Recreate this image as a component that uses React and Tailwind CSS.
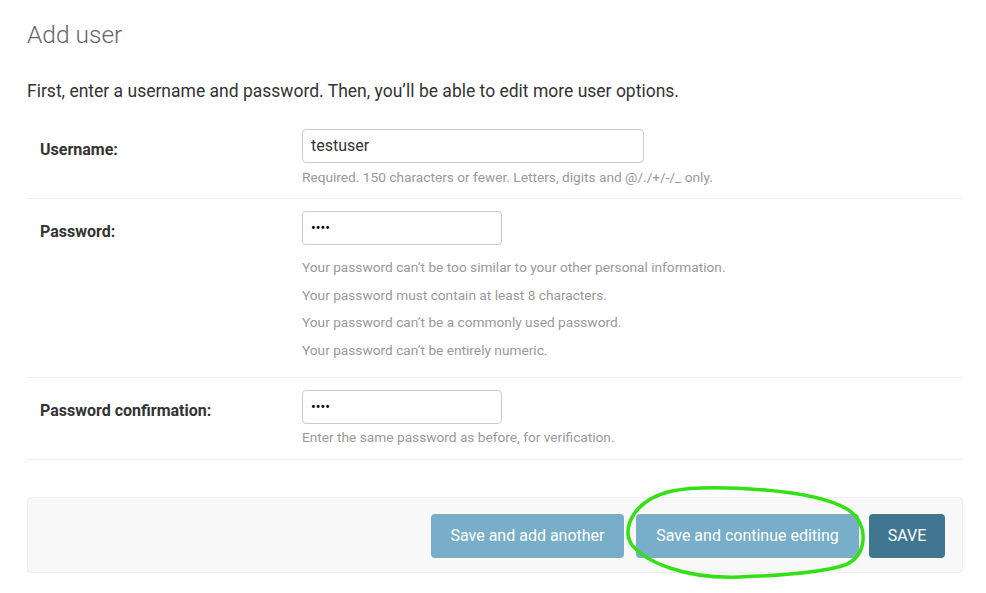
import React from 'react';

const font = { fontFamily: 'Roboto, "Liberation Sans", sans-serif' };

function Row({ label, children }) {
  return (
    <div className="flex border-b border-[#eeeeee] pl-[13px] pt-[12px]">
      <label className="w-[262px] shrink-0 pt-[11px] text-[16px] leading-[20px] font-bold text-[#333]">
        {label}
      </label>
      <div className="flex flex-col">{children}</div>
    </div>
  );
}

function Help({ children, className = '' }) {
  return (
    <div className={`text-[13.7px] leading-[20px] text-[#999] ${className}`}>{children}</div>
  );
}

export default function App() {
  return (
    <div className="relative min-h-[593px] bg-white pl-[27px] pr-[23px] pt-[21px] text-[#333]" style={font}>
      <h1 className="text-[24.5px] leading-[28.8px] font-light text-[#666]">Add user</h1>
      <p className="mt-[29px] text-[17.5px] leading-[24px] text-[#333]">
        First, enter a username and password. Then, you’ll be able to edit more user options.
      </p>

      <div className="mt-[14px]">
        <Row label="Username:">
          <input
            type="text"
            defaultValue="testuser"
            className="h-[34px] w-[342px] rounded-[4px] border border-[#cccccc] px-[8px] text-[16px] text-[#333] outline-none"
          />
          <Help className="mt-[4px] pb-[11px]">
            Required. 150 characters or fewer. Letters, digits and @/./+/-/_ only.
          </Help>
        </Row>
        <Row label="Password:">
          <input
            type="password"
            defaultValue="abcd"
            className="h-[34px] w-[200px] rounded-[4px] border border-[#cccccc] px-[8px] text-[14px] text-black outline-none"
          />
          <ul className="mt-[9px] pb-[12px] text-[13.7px] leading-[27.7px] text-[#999]">
            <li>Your password can’t be too similar to your other personal information.</li>
            <li>Your password must contain at least 8 characters.</li>
            <li>Your password can’t be a commonly used password.</li>
            <li>Your password can’t be entirely numeric.</li>
          </ul>
        </Row>
        <Row label="Password confirmation:">
          <input
            type="password"
            defaultValue="abcd"
            className="h-[34px] w-[200px] rounded-[4px] border border-[#cccccc] px-[8px] text-[14px] text-black outline-none"
          />
          <Help className="mt-[3px] pb-[12px]">
            Enter the same password as before, for verification.
          </Help>
        </Row>
      </div>

      <div className="mt-[37px] flex justify-end gap-[10px] rounded-[4px] border border-[#eeeeee] bg-[#f8f8f8] pt-[16px] pb-[14px] pr-[17px]">
        <button className="h-[44px] w-[193px] rounded-[4px] bg-[#79aec8] text-[16px] text-white">
          Save and add another
        </button>
        <button className="ml-[2px] h-[44px] w-[223px] rounded-[4px] bg-[#79aec8] text-[16px] text-white">
          Save and continue editing
        </button>
        <button className="h-[44px] w-[76px] rounded-[4px] bg-[#417690] text-[16px] text-white">
          SAVE
        </button>
      </div>

      <svg
        className="pointer-events-none absolute left-0 top-0"
        width="986"
        height="593"
        viewBox="0 0 986 593"
      >
        <path
          d="M672 491 C700 485 740 488 765 490 C800 493 830 499 847 509 C860 517 864 530 863 540 C862 552 857 560 845 565 C825 572 790 575 740 577 C710 578 690 575 670 568 C652 562 640 555 632 545 C626 536 627 525 634 514 C642 502 655 495 672 491 Z"
          fill="none"
          stroke="#33e014"
          strokeWidth="3.5"
          strokeLinecap="round"
        />
      </svg>
    </div>
  );
}
